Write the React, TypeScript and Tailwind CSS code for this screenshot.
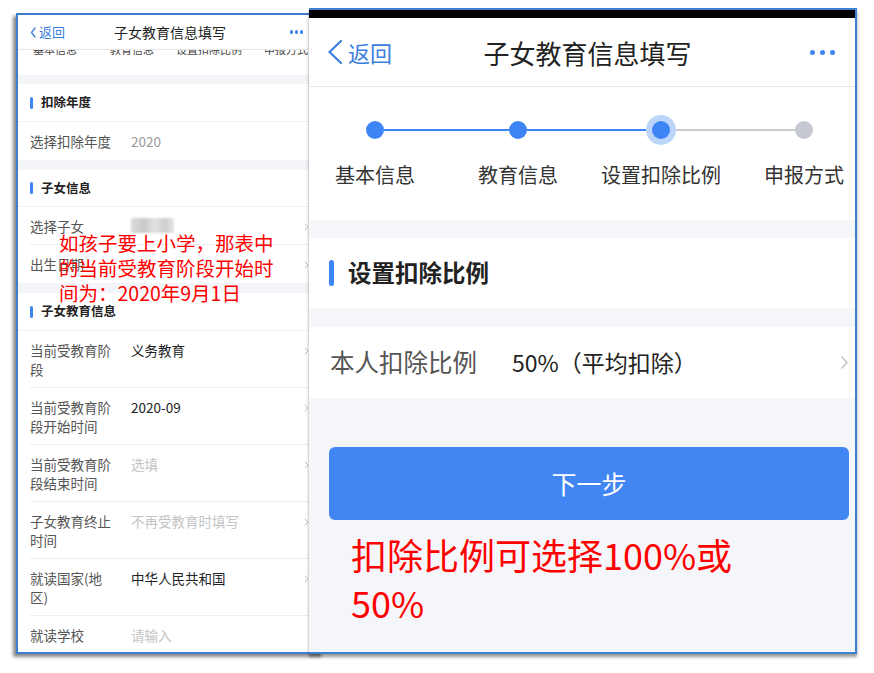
import React from "react";

const Chevron = ({ w, h, color, sw }: { w: number; h: number; color: string; sw: number }) => (
  <svg width={w} height={h} viewBox={`0 0 ${w} ${h}`} fill="none">
    <polyline points={`1,1 ${w - 1},${h / 2} 1,${h - 1}`} stroke={color} strokeWidth={sw} strokeLinecap="round" strokeLinejoin="round" />
  </svg>
);

const BackArrow = ({ w, h, sw }: { w: number; h: number; sw: number }) => (
  <svg width={w} height={h} viewBox={`0 0 ${w} ${h}`} fill="none">
    <polyline points={`${w - 1},1 1.5,${h / 2} ${w - 1},${h - 1}`} stroke="#3b80e0" strokeWidth={sw} strokeLinecap="round" strokeLinejoin="round" />
  </svg>
);

type Row = { label: string; value?: string; tone?: "dark" | "mid" | "light"; chevron?: boolean; double?: boolean; blur?: boolean; sep?: boolean };

const LeftRow = ({ r }: { r: Row }) => (
  <div className={`ml-[12px] flex shrink-0 pt-[9.5px] ${r.double ? "h-[57px]" : "h-[38px]"} ${r.sep ? "border-b border-[#eeeeee]" : ""}`}>
    <div className="w-[101px] shrink-0 pr-[18px] text-[13.5px] leading-[19px] text-[#555]">{r.label}</div>
    <div className="flex-1 text-[13.5px] leading-[19px]">
      {r.blur ? (
        <div className="mt-[1.5px] h-[15px] w-[43px] rounded-[2px] bg-[linear-gradient(90deg,#dcdcdc,#c9c9c9_30%,#e2e2e2_55%,#cdcdcd_80%,#e4e4e4)] blur-[1px]" />
      ) : (
        <span className={r.tone === "dark" ? "text-[#222]" : r.tone === "mid" ? "text-[#999]" : "text-[#c4c4c4]"}>{r.value}</span>
      )}
    </div>
    {r.chevron && (
      <div className="mr-[13px] mt-[6px] shrink-0">
        <Chevron w={5} h={8} color="#c2c2c2" sw={1} />
      </div>
    )}
  </div>
);

const LeftHeader = ({ title, h }: { title: string; h: string }) => (
  <div className={`${h} flex shrink-0 items-center border-b border-[#f0f0f0] pl-[12px]`}>
    <div className="h-[12px] w-[3px] rounded-full bg-[#3d85f5]" />
    <div className="ml-[8px] text-[12.5px] font-bold text-[#222]">{title}</div>
  </div>
);

const LeftPanel = () => (
  <div className="absolute left-[16px] top-[13px] flex h-[641px] w-[308px] flex-col overflow-hidden border-2 border-[#3f7fcf] bg-white shadow-[-3px_3px_3px_rgba(0,0,0,0.45)]">
    <div className="grid h-[35px] shrink-0 grid-cols-[1fr_auto_1fr] items-center border-b border-[#e6e6e6] bg-white">
      <div className="flex items-center pl-[12px]">
        <BackArrow w={6} h={11} sw={1.3} />
        <span className="ml-[3px] text-[13px] text-[#3b80e0]">返回</span>
      </div>
      <div className="text-[14px] text-[#222]">子女教育信息填写</div>
      <div className="flex justify-end gap-[1.5px] pr-[19px]">
        <span className="h-[3.5px] w-[3.5px] rounded-full bg-[#3d85f5]" />
        <span className="h-[3.5px] w-[3.5px] rounded-full bg-[#3d85f5]" />
        <span className="h-[3.5px] w-[3.5px] rounded-full bg-[#3d85f5]" />
      </div>
    </div>
    <div className="h-[25px] shrink-0">
      <div className="h-[6px] overflow-hidden">
        <div className="ml-[-1.5px] mt-[-8px] flex text-[11px] leading-[14px] text-[#444]">
          <div className="w-[77px] shrink-0 text-center">基本信息</div>
          <div className="w-[77px] shrink-0 text-center">教育信息</div>
          <div className="w-[77px] shrink-0 text-center whitespace-nowrap">设置扣除比例</div>
          <div className="w-[77px] shrink-0 text-center">申报方式</div>
        </div>
      </div>
    </div>
    <div className="h-[9px] shrink-0 bg-[#f4f5f8]" />
    <LeftHeader title="扣除年度" h="h-[38px]" />
    <LeftRow r={{ label: "选择扣除年度", value: "2020", tone: "mid" }} />
    <div className="h-[10px] shrink-0 bg-[#f4f5f8]" />
    <LeftHeader title="子女信息" h="h-[37px]" />
    <LeftRow r={{ label: "选择子女", blur: true, chevron: true, sep: true }} />
    <LeftRow r={{ label: "出生日期", value: "", chevron: true }} />
    <div className="h-[10px] shrink-0 bg-[#f4f5f8]" />
    <LeftHeader title="子女教育信息" h="h-[38px]" />
    <LeftRow r={{ label: "当前受教育阶段", value: "义务教育", tone: "dark", chevron: true, double: true, sep: true }} />
    <LeftRow r={{ label: "当前受教育阶段开始时间", value: "2020-09", tone: "dark", chevron: true, double: true, sep: true }} />
    <LeftRow r={{ label: "当前受教育阶段结束时间", value: "选填", tone: "light", chevron: true, double: true, sep: true }} />
    <LeftRow r={{ label: "子女教育终止时间", value: "不再受教育时填写", tone: "light", chevron: true, double: true, sep: true }} />
    <LeftRow r={{ label: "就读国家(地区)", value: "中华人民共和国", tone: "dark", chevron: true, double: true, sep: true }} />
    <LeftRow r={{ label: "就读学校", value: "请输入", tone: "light", double: true }} />
  </div>
);

const steps = [
  { label: "基本信息", left: "bg-transparent", right: "bg-[#3d85f5]", kind: "done" },
  { label: "教育信息", left: "bg-[#3d85f5]", right: "bg-[#3d85f5]", kind: "done" },
  { label: "设置扣除比例", left: "bg-[#3d85f5]", right: "bg-[#c8cbd2]", kind: "active" },
  { label: "申报方式", left: "bg-[#c8cbd2]", right: "bg-transparent", kind: "todo" },
];

const RightPanel = () => (
  <div className="absolute left-[309px] top-[8px] flex h-[646px] w-[548px] flex-col overflow-hidden border-b-2 border-r-2 border-t-2 border-[#3f7fcf] bg-[#f5f6fa] shadow-[0px_3px_3px_rgba(0,0,0,0.4)]">
    <div className="h-[8px] shrink-0 bg-black" />
    <div className="grid h-[69px] shrink-0 grid-cols-[1fr_auto_1fr] items-center border-b-[1.5px] border-[#e6e6e6] bg-white">
      <div className="flex items-center pl-[19px]">
        <BackArrow w={14} h={24} sw={2.2} />
        <span className="ml-[6px] text-[22px] text-[#3b80e0]">返回</span>
      </div>
      <div className="pl-[11px] text-[26px] text-[#222]">子女教育信息填写</div>
      <div className="flex justify-end gap-[5px] pr-[20px]">
        <span className="h-[5px] w-[5px] rounded-full bg-[#3d85f5]" />
        <span className="h-[5px] w-[5px] rounded-full bg-[#3d85f5]" />
        <span className="h-[5px] w-[5px] rounded-full bg-[#3d85f5]" />
      </div>
    </div>
    <div className="h-[133px] shrink-0 bg-white pt-[28px]">
      <div className="ml-[-5.5px] flex">
        {steps.map((s) => (
          <div key={s.label} className="flex w-[143px] shrink-0 flex-col items-center">
            <div className="flex h-[30px] w-full items-center">
              <div className={`h-[2.5px] flex-1 ${s.left}`} />
              {s.kind === "active" ? (
                <div className="flex h-[30px] w-[30px] items-center justify-center rounded-full bg-[#bcd5fb]">
                  <div className="h-[18px] w-[18px] rounded-full bg-[#3d85f5]" />
                </div>
              ) : s.kind === "done" ? (
                <div className="h-[18px] w-[18px] rounded-full bg-[#3d85f5]" />
              ) : (
                <div className="h-[18px] w-[18px] rounded-full bg-[#c5c8d0]" />
              )}
              <div className={`h-[2.5px] flex-1 ${s.right}`} />
            </div>
            <div className="mt-[16px] whitespace-nowrap text-[20px] leading-[28px] text-[#333]">{s.label}</div>
          </div>
        ))}
      </div>
    </div>
    <div className="h-[18px] shrink-0" />
    <div className="flex h-[70px] shrink-0 items-center bg-white pl-[20px]">
      <div className="h-[26px] w-[5px] rounded-full bg-[#3d85f5]" />
      <div className="ml-[14px] text-[23.5px] font-bold text-[#222]">设置扣除比例</div>
    </div>
    <div className="h-[19px] shrink-0" />
    <div className="flex h-[71px] shrink-0 items-center bg-white pl-[21px]">
      <div className="w-[182px] shrink-0 text-[24.5px] text-[#555]">本人扣除比例</div>
      <div className="flex-1 text-[23px] text-[#222]">50%（平均扣除）</div>
      <div className="mr-[7px]">
        <Chevron w={7} h={13} color="#c4c4c4" sw={1.6} />
      </div>
    </div>
    <div className="ml-[20px] mr-[6px] mt-[49px] flex h-[73px] shrink-0 items-center justify-center rounded-[6px] bg-[#4286f4] text-[25px] text-white">
      下一步
    </div>
    <div className="ml-[42px] mt-[10px] text-[36px] leading-[48px] text-[#fe0000]">
      扣除比例可选择100%或
      <br />
      50%
    </div>
  </div>
);

export default function App() {
  return (
    <div className="relative h-[673px] w-[874px] overflow-hidden bg-white font-['Noto_Sans_CJK_SC','Noto_Sans',sans-serif]">
      <LeftPanel />
      <RightPanel />
      <div className="absolute left-[59px] top-[230px] text-[19.5px] leading-[25px] text-[#fe0000] whitespace-nowrap">
        如孩子要上小学，那表中
        <br />
        的当前受教育阶段开始时
        <br />
        间为：2020年9月1日
      </div>
    </div>
  );
}
